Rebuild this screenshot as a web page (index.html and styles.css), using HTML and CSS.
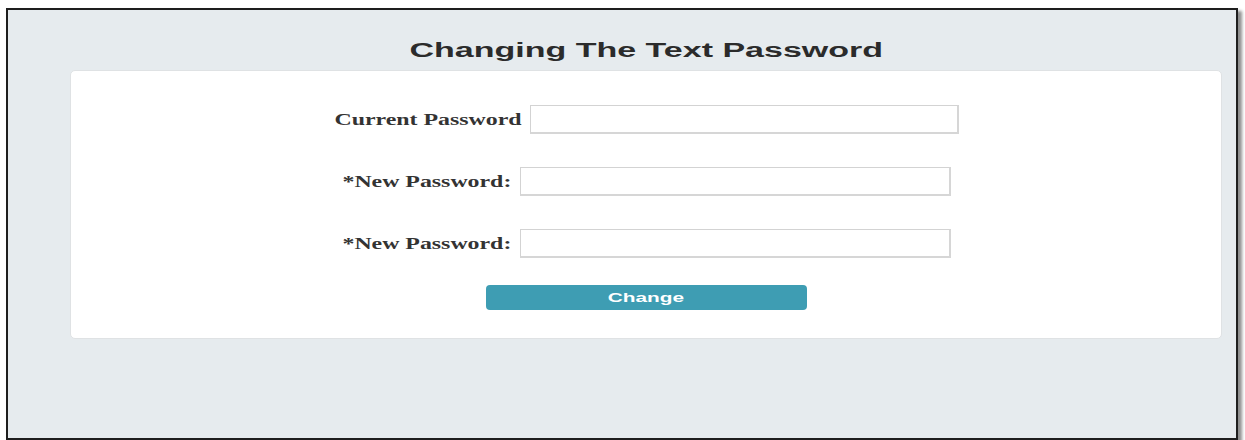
FILE: index.html
```html
<!DOCTYPE html>
<html lang="en">
<head>
<meta charset="utf-8">
<title>Change Password</title>
<link rel="stylesheet" href="styles.css">
</head>
<body>
  <div class="frame">
    <h1 class="title"><span class="wide">Changing The Text Password</span></h1>
    <form class="card">
      <div class="row">
        <label class="label label-current" for="cur"><span class="wide">Current Password</span></label>
        <input class="field field-current" id="cur" type="password">
      </div>
      <div class="row">
        <label class="label label-new" for="new1"><span class="wide">*New Password:</span></label>
        <input class="field" id="new1" type="password">
      </div>
      <div class="row">
        <label class="label label-new" for="new2"><span class="wide">*New Password:</span></label>
        <input class="field" id="new2" type="password">
      </div>
      <button class="btn" type="button"><span class="wide">Change</span></button>
    </form>
  </div>
</body>
</html>
```
FILE: styles.css
```css
html, body {
  margin: 0;
  padding: 0;
  background: #ffffff;
}

.frame {
  box-sizing: border-box;
  margin: 8px 0 0 6px;
  width: 1232px;
  height: 432px;
  border: 2px solid #1e1e1e;
  background: #e6ebee;
  box-shadow: 4px 3px 3px #8f8f8f;
  padding: 0 14px 0 62px;
  overflow: hidden;
}

.wide {
  display: inline-block;
  white-space: nowrap;
}

.title {
  margin: 0;
  height: 60px;
  display: flex;
  align-items: center;
  justify-content: center;
  padding-top: 21px;
  box-sizing: border-box;
  font-family: "Liberation Sans", Arial, sans-serif;
  font-weight: bold;
  font-size: 20px;
  color: #2b2b2b;
}

.title .wide {
  transform: scaleX(1.7);
  transform-origin: center;
}

.card {
  box-sizing: border-box;
  height: 269px;
  background: #ffffff;
  border: 1px solid #dfe2e4;
  border-radius: 5px;
  padding: 34px 0 0;
  display: flex;
  flex-direction: column;
  align-items: center;
  gap: 33px;
}

.row {
  display: flex;
  align-items: center;
  gap: 8px;
  height: 29px;
}

.label {
  display: block;
  text-align: right;
  font-family: "Liberation Serif", "Times New Roman", serif;
  font-weight: bold;
  font-size: 16px;
  color: #333333;
}

.label .wide {
  transform: scaleX(1.49);
  transform-origin: right center;
}

.label-current {
  width: 188px;
}

.label-new {
  width: 170px;
}

.field {
  box-sizing: border-box;
  width: 431px;
  height: 29px;
  margin: 0;
  border: 1px solid #d3d3d3;
  border-right: 2px solid #d6d6d6;
  border-bottom: 2px solid #d6d6d6;
  background: #ffffff;
  outline: none;
}

.field-current {
  width: 429px;
}

.btn {
  margin-top: -6px;
  box-sizing: border-box;
  width: 321px;
  height: 25px;
  border: none;
  border-radius: 4px;
  background: #3e9db3;
  color: #ffffff;
  font-family: "Liberation Sans", Arial, sans-serif;
  font-weight: bold;
  font-size: 13px;
  padding: 0;
  display: flex;
  align-items: center;
  justify-content: center;
}

.btn .wide {
  transform: scaleX(1.6);
  transform-origin: center;
}
```
